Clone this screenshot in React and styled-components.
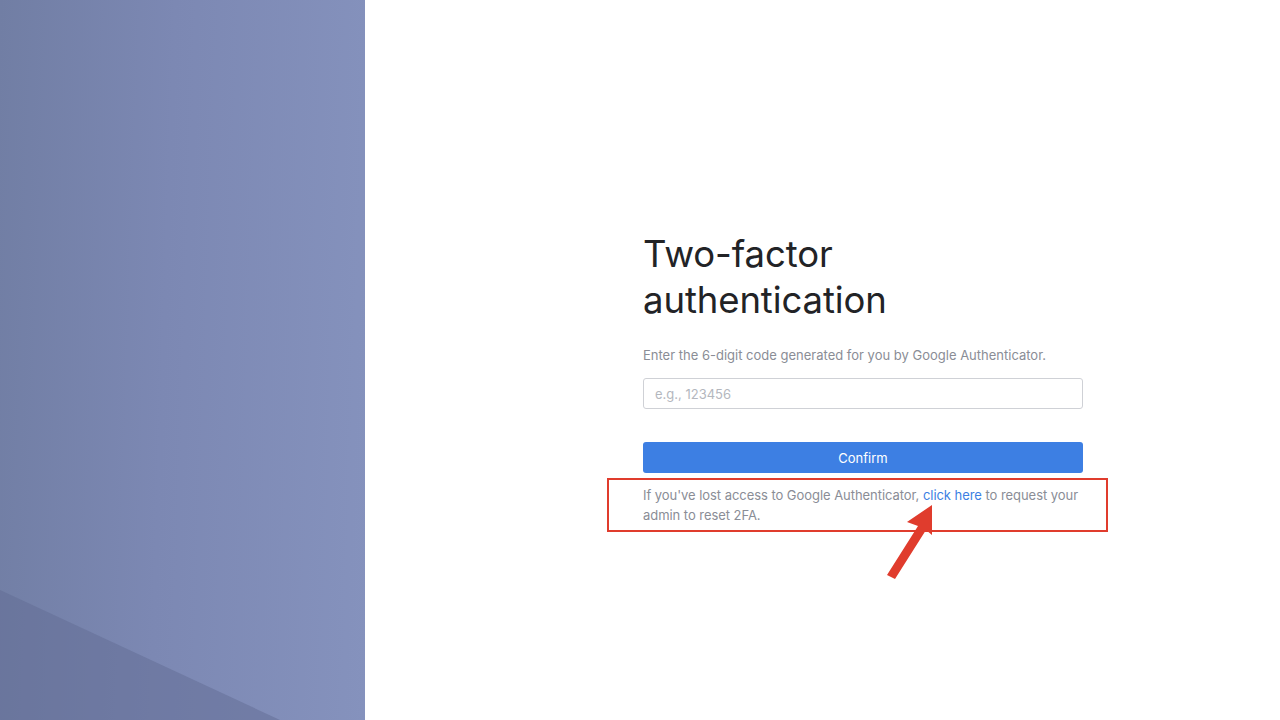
import React from "react";
import styled, { createGlobalStyle } from "styled-components";

const GlobalStyle = createGlobalStyle`
  html, body {
    margin: 0;
    padding: 0;
    height: 100%;
    background: #ffffff;
  }
  body {
    font-family: Inter, "Noto Sans", "Liberation Sans", sans-serif;
  }
  #root {
    height: 100%;
  }
`;

const Page = styled.div`
  display: flex;
  width: 100%;
  height: 720px;
  overflow: hidden;
`;

const SidePanel = styled.div`
  position: relative;
  flex: 0 0 365px;
  height: 100%;
  background: linear-gradient(92deg, #717ea4 0%, #7c88b3 45%, #8592bd 100%);
  overflow: hidden;

  &::after {
    content: "";
    position: absolute;
    inset: 0;
    background: #626c94;
    opacity: 0.5;
    clip-path: polygon(0 590px, 280px 720px, 0 720px);
  }
`;

const Main = styled.div`
  flex: 1;
  display: flex;
  justify-content: center;
  padding: 231px 0 0 81px;
`;

const Form = styled.div`
  position: relative;
  width: 440px;
  display: flex;
  flex-direction: column;
`;

const Title = styled.h1`
  margin: 0;
  font-size: 36.5px;
  line-height: 46px;
  font-weight: 400;
  color: #222326;
  letter-spacing: -0.1px;
`;

const Hint = styled.p`
  margin: 22px 0 0;
  font-size: 13px;
  line-height: 20px;
  color: #8a8d96;
`;

const CodeInput = styled.input`
  box-sizing: border-box;
  margin-top: 13px;
  width: 100%;
  height: 31px;
  padding: 0 11px;
  border: 1px solid #cfd1d6;
  border-radius: 3px;
  font-family: inherit;
  font-size: 13px;
  color: #333;
  outline: none;

  &::placeholder {
    color: #b4b7be;
  }
`;

const ConfirmButton = styled.button`
  margin-top: 33px;
  width: 100%;
  height: 31px;
  border: none;
  border-radius: 3px;
  background: #3d7fe3;
  color: #ffffff;
  font-family: inherit;
  font-size: 13px;
  cursor: pointer;
`;

const Help = styled.p`
  position: relative;
  margin: 12px 0 0;
  font-size: 13px;
  line-height: 20px;
  color: #8a8d96;
  letter-spacing: -0.05px;
`;

const Highlight = styled.span`
  position: absolute;
  left: -36px;
  right: -25px;
  top: -7px;
  bottom: -7px;
  border: 2px solid #e03c2d;
  pointer-events: none;
`;

const Link = styled.a`
  color: #3d7fe3;
  text-decoration: none;
  cursor: pointer;
`;

const Arrow = styled.svg`
  position: absolute;
  left: 240px;
  top: 269px;
  overflow: visible;
`;

export default function App() {
  return (
    <>
      <GlobalStyle />
      <Page>
        <SidePanel />
        <Main>
          <Form>
            <Title>
              Two-factor
              <br />
              authentication
            </Title>
            <Hint>Enter the 6-digit code generated for you by Google Authenticator.</Hint>
            <CodeInput placeholder="e.g., 123456" />
            <ConfirmButton>Confirm</ConfirmButton>
            <Help>
              If you've lost access to Google Authenticator, <Link>click here</Link> to request your
              admin to reset 2FA.
              <Highlight />
            </Help>
            <Arrow width="60" height="80" viewBox="0 0 60 80">
              <polygon points="49,5 49,35 43,30 12,79 4,75 35,26 24,22" fill="#e03c2d" />
            </Arrow>
          </Form>
        </Main>
      </Page>
    </>
  );
}
